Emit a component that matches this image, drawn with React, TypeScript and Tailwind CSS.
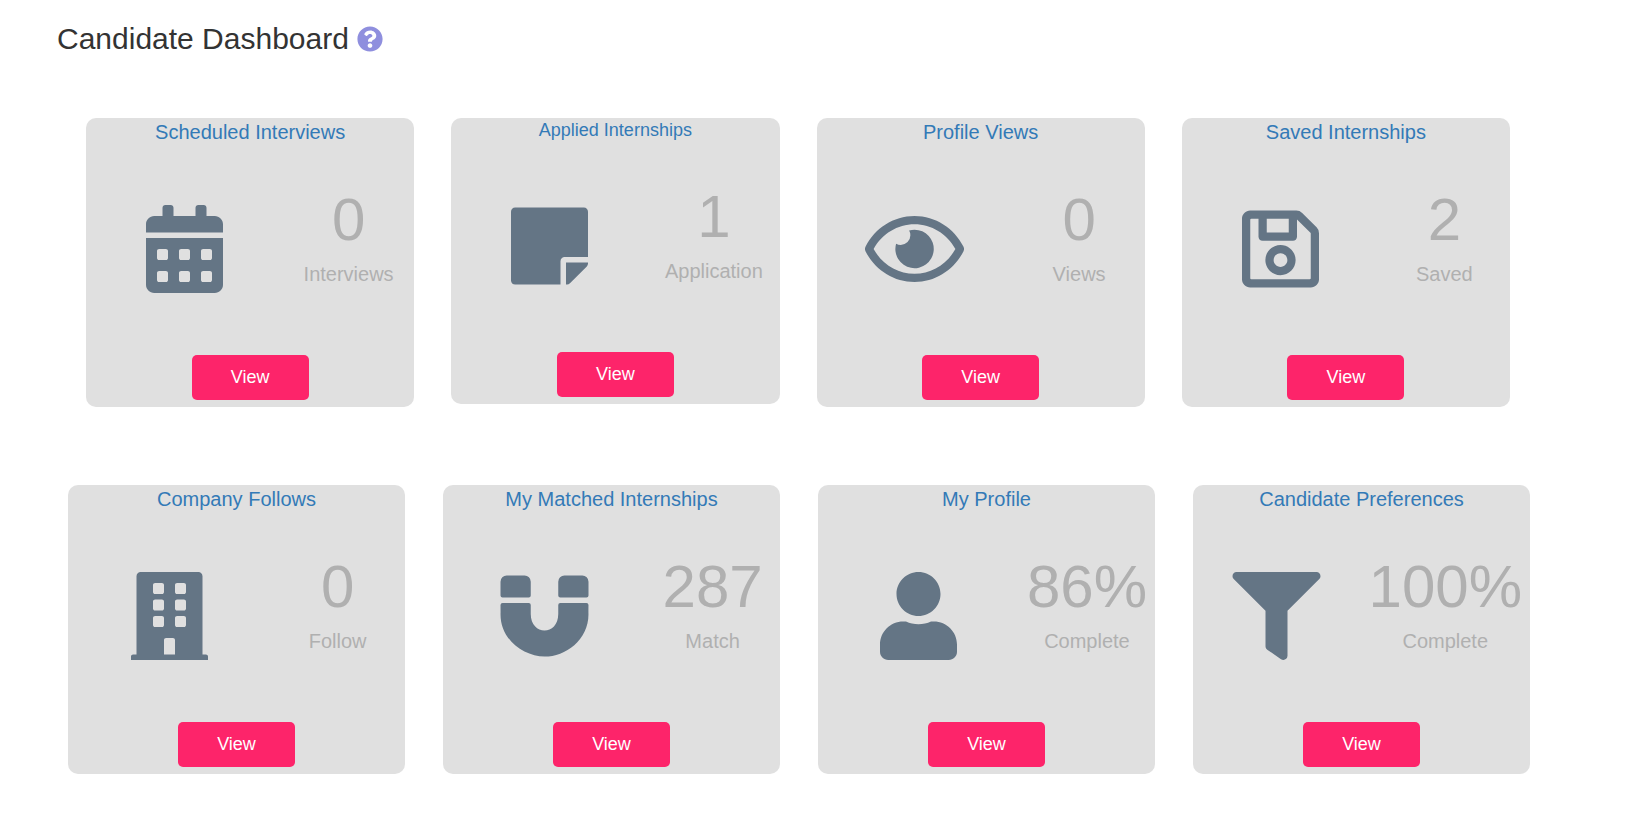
import type { IconType } from 'react-icons';
import {
  FaBuilding,
  FaCalendarAlt,
  FaFilter,
  FaMagnet,
  FaRegEye,
  FaRegSave,
  FaStickyNote,
  FaUser,
} from 'react-icons/fa';
import clsx from 'clsx';

interface Stat {
  title: string;
  value: string;
  label: string;
  icon: IconType;
  compact?: boolean;
}

const activityStats: Stat[] = [
  { title: 'Scheduled Interviews', value: '0', label: 'Interviews', icon: FaCalendarAlt },
  { title: 'Applied Internships', value: '1', label: 'Application', icon: FaStickyNote, compact: true },
  { title: 'Profile Views', value: '0', label: 'Views', icon: FaRegEye },
  { title: 'Saved Internships', value: '2', label: 'Saved', icon: FaRegSave },
];

const profileStats: Stat[] = [
  { title: 'Company Follows', value: '0', label: 'Follow', icon: FaBuilding },
  { title: 'My Matched Internships', value: '287', label: 'Match', icon: FaMagnet },
  { title: 'My Profile', value: '86%', label: 'Complete', icon: FaUser },
  { title: 'Candidate Preferences', value: '100%', label: 'Complete', icon: FaFilter },
];

function HelpIcon() {
  return (
    <svg viewBox="0 0 512 512" className="size-[26px]" fill="currentColor" aria-hidden="true">
      <path d="M504 256c0 136.997-111.043 248-248 248S8 392.997 8 256C8 119.083 119.043 8 256 8s248 111.083 248 248zM262.655 90c-54.497 0-89.255 22.957-116.549 63.758-3.536 5.286-2.353 12.415 2.715 16.258l34.699 26.31c5.205 3.947 12.621 3.008 16.665-2.122 17.864-22.658 30.113-35.797 57.303-35.797 20.429 0 45.698 13.148 45.698 32.958 0 14.976-12.363 22.667-32.534 33.976C247.128 238.528 216 254.941 216 296v4c0 6.627 5.373 12 12 12h56c6.627 0 12-5.373 12-12v-1.333c0-28.462 83.186-29.647 83.186-106.667 0-58.002-60.165-102-116.531-102zM256 338c-25.365 0-46 20.635-46 46 0 25.364 20.635 46 46 46s46-20.636 46-46c0-25.365-20.635-46-46-46z" />
    </svg>
  );
}

function StatCard({ title, value, label, icon: Icon, compact }: Stat) {
  return (
    <section className="flex flex-col items-center rounded-[10px] bg-[#e0e0e0] pb-[7px]">
      <h2 className={clsx('text-[#337ab7]', compact ? 'text-[18px] leading-[25px]' : 'text-[20px] leading-[28px]')}>
        <a href="#">{title}</a>
      </h2>

      <div className="flex w-full pb-[62px]">
        <div className="flex flex-1 justify-center pt-[59px] text-[#647585]">
          <Icon className="h-[88px] w-[99px]" aria-hidden="true" />
        </div>
        {/* Grows past 40% when the value is wide */}
        <div className="min-w-[40%] shrink-0 px-2 pt-[44px] text-center text-[#b0b0b0]">
          <p className="text-[60px] leading-[60px]">{value}</p>
          <p className="mt-[10px] text-[20px] leading-[28px]">{label}</p>
        </div>
      </div>

      <button
        type="button"
        className="h-[45px] w-[117px] cursor-pointer rounded-[5px] bg-[#fd246a] pb-[2px] text-[18px] leading-[24px] text-white"
      >
        View
      </button>
    </section>
  );
}

export default function App() {
  return (
    <main className="min-h-screen bg-white pb-[65px] font-['Liberation_Sans',Arial,sans-serif]">
      <header className="flex items-center gap-2 pt-[22px] pl-[57px]">
        <h1 className="text-[30px] leading-[34px] text-[#333333]">Candidate Dashboard</h1>
        <button type="button" aria-label="Help" className="cursor-pointer text-[#8f8fde]">
          <HelpIcon />
        </button>
      </header>

      <div className="mt-[62px] grid grid-cols-4 items-start gap-x-[37px] pr-[123px] pl-[86px]">
        {activityStats.map((stat) => (
          <StatCard key={stat.title} {...stat} />
        ))}
      </div>

      <div className="mt-[78px] grid grid-cols-4 items-start gap-x-[38px] pr-[103px] pl-[68px]">
        {profileStats.map((stat) => (
          <StatCard key={stat.title} {...stat} />
        ))}
      </div>
    </main>
  );
}
